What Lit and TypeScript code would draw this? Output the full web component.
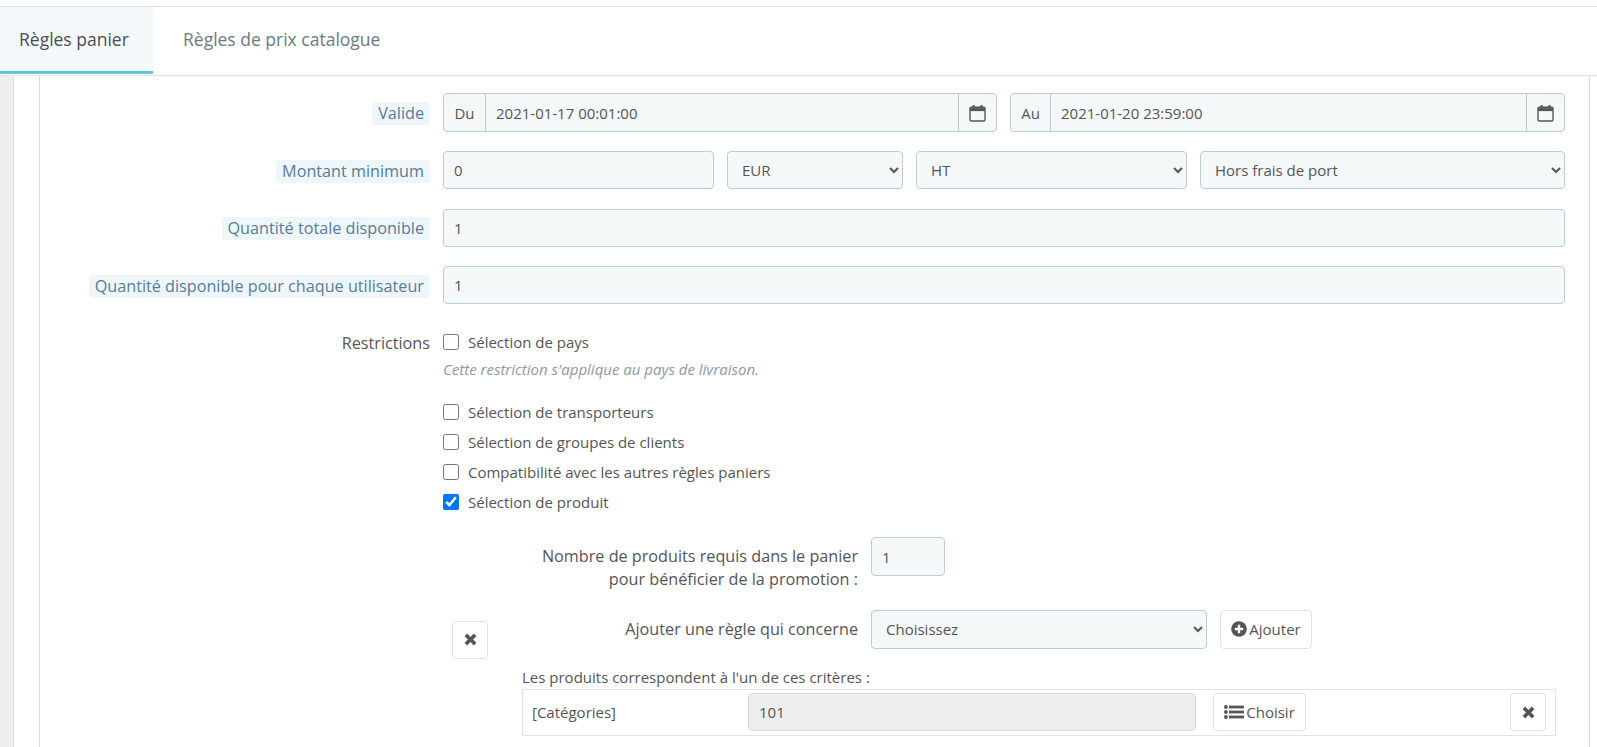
import { LitElement, html, css } from "lit";
import { customElement } from "lit/decorators.js";

const cal = html`<svg class="ico" width="17" height="18" viewBox="0 0 17 18" fill="none" stroke="currentColor"><rect x="1" y="3.2" width="15" height="13.8" rx="1.2" stroke-width="1.4"/><path d="M1 5.6h15" stroke-width="3"/><path d="M4.6 1v3.2M12.4 1v3.2" stroke-width="2"/></svg>`;
const times = html`<svg class="ico" width="13" height="13" viewBox="0 0 13 13" fill="currentColor"><path d="M3.2 .6 6.5 3.9 9.8 .6 12.4 3.2 9.1 6.5 12.4 9.8 9.8 12.4 6.5 9.1 3.2 12.4 .6 9.8 3.9 6.5 .6 3.2z"/></svg>`;
const plus = html`<svg class="ico" width="16" height="16" viewBox="0 0 16 16"><circle cx="8" cy="8" r="7.8" fill="currentColor"/><path d="M8 3.8v8.4M3.8 8h8.4" stroke="#fff" stroke-width="2.4"/></svg>`;
const list = html`<svg class="ico" width="20" height="14" viewBox="0 0 20 14" fill="currentColor"><circle cx="1.9" cy="2" r="1.9"/><circle cx="1.9" cy="7" r="1.9"/><circle cx="1.9" cy="12" r="1.9"/><rect x="5" y=".6" width="15" height="2.8"/><rect x="5" y="5.6" width="15" height="2.8"/><rect x="5" y="10.6" width="15" height="2.8"/></svg>`;

@customElement("app-root")
export class AppRoot extends LitElement {
  static styles = css`
    :host { display: block; width: 1597px; height: 747px; overflow: hidden; background: #fff;
      font-family: "Open Sans", "Noto Sans", sans-serif; font-size: 15px; color: #555; }
    .tabs { display: flex; margin-top: 6px; border-top: 1px solid #dfe3e4; border-bottom: 1px solid #dfe3e4; height: 68px; }
    .tab { display: flex; align-items: center; box-sizing: border-box; height: 67px; font-size: 17.5px; padding: 0 26px 4px 19px; color: #6c7b80; white-space: nowrap; }
    .tab.active { width: 153px; background: #f4f9fb; color: #4a4f52; border-bottom: 3px solid #5bc8dc; padding-bottom: 1px; padding-right: 0; }
    .tab.second { padding-left: 30px; }
    .body { display: flex; height: 672px; }
    .rail { width: 13px; background: #eef0f0; border-right: 1px solid #dfe3e4; }
    .panel { margin-left: 25px; width: 1551px; box-sizing: border-box; border-left: 1px solid #d8dcdd; border-right: 1px solid #d8dcdd; padding: 17px 0 0 0; }
    .row { display: grid; grid-template-columns: 390px 1122px; column-gap: 13px; align-items: center; margin-bottom: 19.4px; }
    .label { text-align: right; font-size: 16.2px; }
    .hint { display: inline-block; background: #eff6f9; color: #567d9b; border-radius: 3px; padding: 0 6px; line-height: 23px; margin-top: 2px; }
    input[type="text"], select { box-sizing: border-box; height: 38px; width: 100%; min-width: 0; background-color: #f5f8f9; border: 1px solid #bbcdd2; border-radius: 4px; color: #555; font: inherit; padding: 0 10px; outline: none; }
    .dates { display: grid; grid-template-columns: 554px 555px; column-gap: 13px; }
    .group { display: flex; height: 39px; box-sizing: border-box; border: 1px solid #bbcdd2; border-radius: 4px; background: #f5f8f9; }
    .group input[type="text"] { height: 37px; border: 0; border-radius: 0; flex: 1; background: transparent; }
    .addon { display: flex; align-items: center; justify-content: center; width: 41px; flex: none; }
    .addon.l { border-right: 1px solid #bbcdd2; }
    .addon.au { width: 39px; }
    .addon.r { width: 37px; border-left: 1px solid #bbcdd2; }
    .amount { display: grid; grid-template-columns: 271px 176px 271px 1fr; column-gap: 13px; }
    .restrict { display: grid; grid-template-columns: 390px 1122px; column-gap: 13px; margin-top: 28px; }
    .restrict > .label { line-height: 20px; padding-top: 1px; }
    .check { display: flex; align-items: center; height: 20px; gap: 9px; margin-bottom: 10px; }
    .check input { margin: 0; width: 16px; height: 16px; flex: none; }
    .help { font-style: italic; color: #8d9a9e; line-height: 20px; margin: -3px 0 23px; }
    .sub { margin-top: 25px; }
    .nb { display: grid; grid-template-columns: 415px 74px; column-gap: 13px; align-items: start; }
    .nb .label { line-height: 23.5px; margin-top: 7.5px; }
    .nb input[type="text"] { height: 39px; }
    .rule { display: flex; margin-top: 18px; align-items: flex-start; }
    .btn { display: inline-flex; align-items: center; justify-content: center; box-sizing: border-box; background: #fff; border: 1px solid #dfe3e4; border-radius: 4px; color: #555; font: inherit; height: 38px; padding: 0; gap: 2px; }
    .btn.square { width: 36px; flex: none; }
    .remove { margin-left: 9px; margin-top: 11px; }
    .add { display: grid; grid-template-columns: 370px 336px 92px; column-gap: 13px; align-items: center; }
    .add select, .add .btn { height: 39px; }
    .crit { margin-left: 34px; }
    .crit-title { line-height: 20px; margin-top: 18px; }
    .box { display: flex; align-items: center; box-sizing: border-box; width: 1034px; height: 47px; margin-top: 2px; padding: 0 9px; border: 1px solid #dfe3e4; }
    .name { width: 216px; flex: none; }
    .box input[type="text"] { width: 448px; flex: none; background: #eeeeef; border-color: #d5d9da; }
    .choose { width: 93px; margin-left: 17px; }
    .box .square { margin-left: auto; }
  `;

  render() {
    return html`
      <div class="tabs">
        <div class="tab active">Règles panier</div>
        <div class="tab second">Règles de prix catalogue</div>
      </div>
      <div class="body">
        <div class="rail"></div>
        <div class="panel">
          <div class="row">
            <div class="label"><span class="hint">Valide</span></div>
            <div class="dates">
              <div class="group"><span class="addon l">Du</span><input type="text" .value=${"2021-01-17 00:01:00"} /><span class="addon r">${cal}</span></div>
              <div class="group"><span class="addon l au">Au</span><input type="text" .value=${"2021-01-20 23:59:00"} /><span class="addon r">${cal}</span></div>
            </div>
          </div>
          <div class="row">
            <div class="label"><span class="hint">Montant minimum</span></div>
            <div class="amount">
              <input type="text" .value=${"0"} />
              <select><option>EUR</option></select>
              <select><option>HT</option></select>
              <select><option>Hors frais de port</option></select>
            </div>
          </div>
          <div class="row">
            <div class="label"><span class="hint">Quantité totale disponible</span></div>
            <input type="text" .value=${"1"} />
          </div>
          <div class="row">
            <div class="label"><span class="hint">Quantité disponible pour chaque utilisateur</span></div>
            <input type="text" .value=${"1"} />
          </div>
          <div class="restrict">
            <div class="label">Restrictions</div>
            <div>
              <label class="check"><input type="checkbox" />Sélection de pays</label>
              <div class="help">Cette restriction s'applique au pays de livraison.</div>
              <label class="check"><input type="checkbox" />Sélection de transporteurs</label>
              <label class="check"><input type="checkbox" />Sélection de groupes de clients</label>
              <label class="check"><input type="checkbox" />Compatibilité avec les autres règles paniers</label>
              <label class="check"><input type="checkbox" checked />Sélection de produit</label>
              <div class="sub">
                <div class="nb">
                  <div class="label">Nombre de produits requis dans le panier<br />pour bénéficier de la promotion :</div>
                  <input type="text" .value=${"1"} />
                </div>
                <div class="rule">
                  <button class="btn square remove">${times}</button>
                  <div>
                    <div class="add">
                      <div class="label">Ajouter une règle qui concerne</div>
                      <select><option>Choisissez</option></select>
                      <button class="btn">${plus}Ajouter</button>
                    </div>
                    <div class="crit">
                      <div class="crit-title">Les produits correspondent à l'un de ces critères :</div>
                      <div class="box">
                        <div class="name">[Catégories]</div>
                        <input type="text" readonly .value=${"101"} />
                        <button class="btn choose">${list}Choisir</button>
                        <button class="btn square">${times}</button>
                      </div>
                    </div>
                  </div>
                </div>
              </div>
            </div>
          </div>
        </div>
      </div>
    `;
  }
}
